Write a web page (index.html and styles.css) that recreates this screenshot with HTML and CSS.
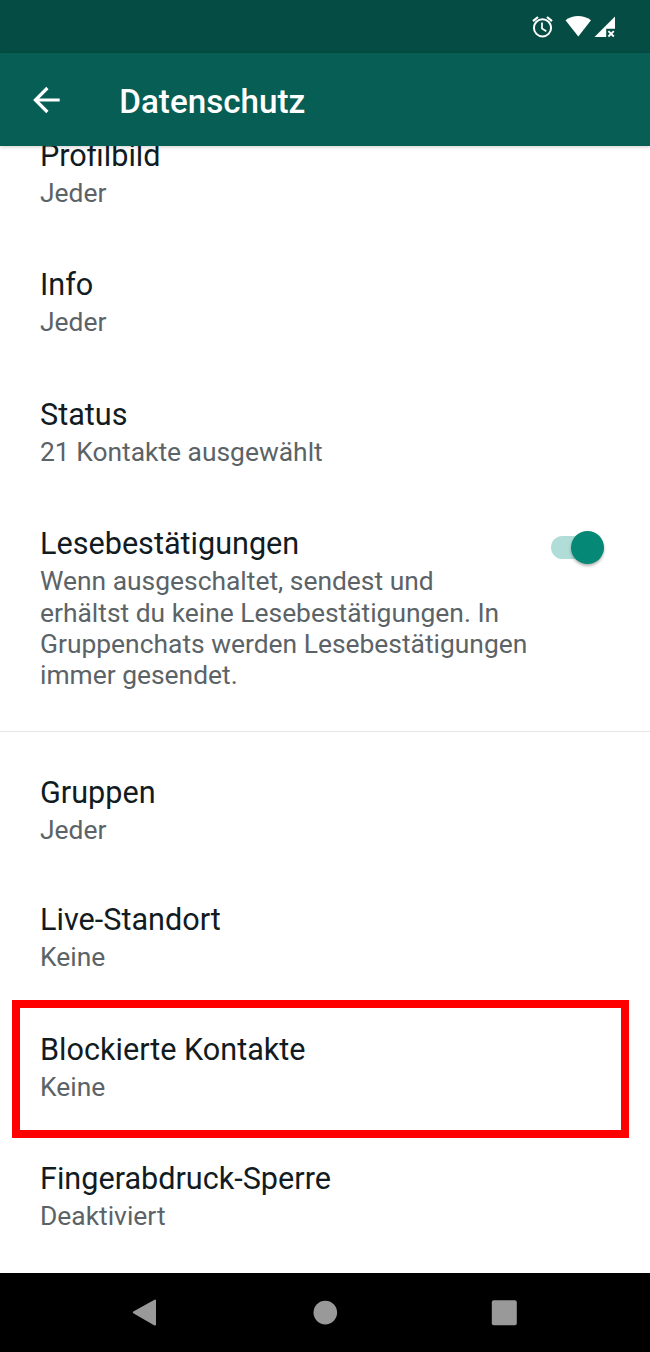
FILE: index.html
```html
<!DOCTYPE html>
<html lang="de">
<head>
<meta charset="utf-8">
<title>Datenschutz</title>
<link rel="stylesheet" href="styles.css">
</head>
<body>
<div class="screen">
  <div class="status-bar">
    <svg class="status-icons" width="96" height="30" viewBox="530 12 96 30">
      <g fill="none" stroke="#fff">
        <circle cx="542.5" cy="27.8" r="8.6" stroke-width="2"/>
        <path d="M542 22.5v6l4.3 2.7" stroke-width="1.7"/>
        <path d="M533 21.2l5-4.2M552 21.2l-5-4.2" stroke-width="2.2"/>
      </g>
      <path d="M565.5 20.2Q578 11.8 591 20.2L578.3 36.4z" fill="#fff"/>
      <path d="M594.5 37L615 16.5v12.2h-8.8V37z" fill="#fff"/>
      <path d="M608.4 31.1l5.4 5.4M613.8 31.1l-5.4 5.4" stroke="#fff" stroke-width="1.9"/>
    </svg>
  </div>
  <header class="app-bar">
    <svg class="back" width="30" height="28" viewBox="32 86 30 28" fill="none" stroke="#fff" stroke-width="3.2">
      <path d="M59.7 100H35.5M47.4 88L35.4 100l12 12"/>
    </svg>
    <h1 class="app-title">Datenschutz</h1>
  </header>
  <main class="settings">
    <section class="group first">
      <div class="item"><div class="title">Profilbild</div><div class="summary">Jeder</div></div>
      <div class="item"><div class="title">Info</div><div class="summary">Jeder</div></div>
      <div class="item"><div class="title">Status</div><div class="summary">21 Kontakte ausgewählt</div></div>
      <div class="item with-switch">
        <div class="text">
          <div class="title">Lesebestätigungen</div>
          <div class="summary">Wenn ausgeschaltet, sendest und<br>erhältst du keine Lesebestätigungen. In<br>Gruppenchats werden Lesebestätigungen<br>immer gesendet.</div>
        </div>
        <div class="switch"><div class="thumb"></div></div>
      </div>
    </section>
    <section class="group second">
      <div class="item short"><div class="title">Gruppen</div><div class="summary">Jeder</div></div>
      <div class="item"><div class="title">Live-Standort</div><div class="summary">Keine</div></div>
      <div class="item marked"><div class="title">Blockierte Kontakte</div><div class="summary">Keine</div></div>
      <div class="item"><div class="title">Fingerabdruck-Sperre</div><div class="summary">Deaktiviert</div></div>
    </section>
  </main>
  <nav class="nav-bar">
    <svg width="650" height="79" viewBox="0 1273 650 79" fill="#999">
      <path d="M133.8 1312.4L155 1300.6V1324.6z" stroke="#999" stroke-width="2" stroke-linejoin="round"/>
      <circle cx="325.3" cy="1312.6" r="11.8"/>
      <rect x="491.8" y="1300.2" width="25" height="25" rx="2"/>
    </svg>
  </nav>
</div>
</body>
</html>
```
FILE: styles.css
```css
body {
  margin: 0;
  background: #fff;
  font-family: Roboto, sans-serif;
}
.screen {
  display: flex;
  flex-direction: column;
  width: 650px;
  height: 1352px;
  overflow: hidden;
}
.status-bar {
  display: flex;
  flex: none;
  justify-content: flex-end;
  box-sizing: border-box;
  height: 53px;
  padding: 12px 24px 0 0;
  background: #054d44;
}
.app-bar {
  display: flex;
  flex: none;
  align-items: center;
  gap: 57.3px;
  box-sizing: border-box;
  height: 93.3px;
  padding-left: 32px;
  background: #075e54;
  box-shadow: 0 1px 4px rgba(0, 0, 0, .2);
  z-index: 1;
}
.app-title {
  margin: 5px 0 0;
  color: #fff;
  font-size: 33.2px;
  font-weight: 500;
  line-height: 40px;
}
.settings {
  flex: 1;
  min-height: 0;
  overflow: hidden;
  background: #fff;
}
.first {
  margin-top: -38px;
  padding-bottom: 11px;
  border-bottom: 1px solid #e6e6e6;
}
.second {
  padding-top: 13.4px;
}
.item {
  box-sizing: border-box;
  padding: 29.3px 40px 28.6px;
}
.short {
  padding-bottom: 26.4px;
}
.title {
  color: #111b21;
  font-size: 30.6px;
  line-height: 36px;
  white-space: nowrap;
}
.summary {
  margin-top: 4.3px;
  color: #5b6367;
  font-size: 26.4px;
  line-height: 31.3px;
  white-space: nowrap;
}
.with-switch {
  display: flex;
  justify-content: space-between;
}
.switch {
  display: flex;
  flex: none;
  justify-content: flex-end;
  align-items: center;
  width: 53px;
  height: 23px;
  margin: 10.2px 5.7px 0 -20px;
  border-radius: 12px;
  background: #b0ddd7;
}
.thumb {
  flex: none;
  width: 33px;
  height: 33px;
  border-radius: 50%;
  background: #058875;
  box-shadow: 0 2px 3px rgba(0, 0, 0, .3);
}
.marked {
  position: relative;
}
.marked::after {
  content: "";
  position: absolute;
  top: -2.7px;
  left: 12.4px;
  box-sizing: border-box;
  width: 616.3px;
  height: 138px;
  border: 8px solid #f00;
}
.nav-bar {
  flex: none;
  height: 79.5px;
  background: #000;
}
.nav-bar svg {
  display: block;
}
```
